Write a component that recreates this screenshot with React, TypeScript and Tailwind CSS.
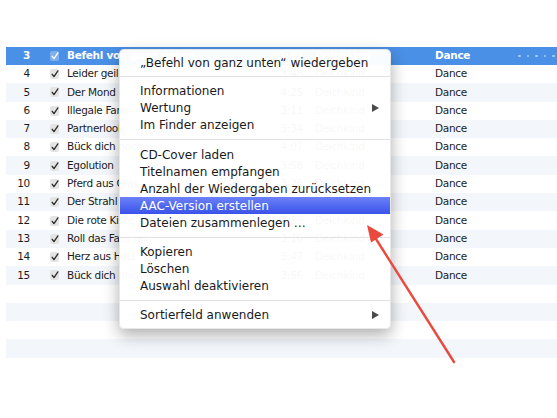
import React from 'react';

type Track = { n: number; title: string; time: string };

const TRACKS: Track[] = [
  { n: 3, title: 'Befehl von ganz unten', time: '3:42' },
  { n: 4, title: 'Leider geil', time: '3:48' },
  { n: 5, title: 'Der Mond', time: '4:25' },
  { n: 6, title: 'Illegale Fans', time: '3:11' },
  { n: 7, title: 'Partnerlook', time: '3:34' },
  { n: 8, title: 'Bück dich hoch', time: '4:07' },
  { n: 9, title: 'Egolution', time: '3:58' },
  { n: 10, title: 'Pferd aus Glas', time: '3:26' },
  { n: 11, title: 'Der Strahl', time: '4:12' },
  { n: 12, title: 'Die rote Kiste', time: '3:39' },
  { n: 13, title: 'Roll das Fass rein', time: '3:16' },
  { n: 14, title: 'Herz aus Holz', time: '3:47' },
  { n: 15, title: 'Bück dich hoch (Remix)', time: '3:56' },
];

type MenuEntry = { label: string; sub?: boolean; active?: boolean } | { sep: number };

const MENU: MenuEntry[] = [
  { label: '„Befehl von ganz unten“ wiedergeben' },
  { sep: 11 },
  { label: 'Informationen' },
  { label: 'Wertung', sub: true },
  { label: 'Im Finder anzeigen' },
  { sep: 13 },
  { label: 'CD-Cover laden' },
  { label: 'Titelnamen empfangen' },
  { label: 'Anzahl der Wiedergaben zurücksetzen' },
  { label: 'AAC-Version erstellen', active: true },
  { label: 'Dateien zusammenlegen …' },
  { sep: 12 },
  { label: 'Kopieren' },
  { label: 'Löschen' },
  { label: 'Auswahl deaktivieren' },
  { sep: 12 },
  { label: 'Sortierfeld anwenden', sub: true },
];

function Check({ selected }: { selected: boolean }) {
  return (
    <span
      className={`flex items-center justify-center w-[9px] h-[10px] rounded-[2px] ${selected ? 'bg-[#7fb0ee]' : 'bg-[#e4e4e4]'}`}
    >
      <svg width="8" height="8" viewBox="0 0 8 8">
        <path
          d="M1.2 4.3 L3 6.6 L6.9 0.9"
          fill="none"
          stroke={selected ? '#ffffff' : '#2a2a2a'}
          strokeWidth="1.3"
          strokeLinecap="round"
          strokeLinejoin="round"
        />
      </svg>
    </span>
  );
}

function Row({ track, index }: { track?: Track; index: number }) {
  const selected = index === 0;
  const bg = selected ? 'bg-[#4a90e6]' : index % 2 === 0 ? 'bg-[#f3f6fa]' : 'bg-white';
  return (
    <div
      className={`flex items-center h-[18.3px] ${bg} ${selected ? 'text-white font-bold' : 'text-[#1c1c1c]'}`}
    >
      {track && (
        <>
          <span className="w-[24px] text-right">{track.n}</span>
          <span className="w-[20px]" />
          <span className="w-[10px]">
            <Check selected={selected} />
          </span>
          <span className="w-[7px]" />
          <span className="w-[203px] whitespace-nowrap overflow-hidden">{track.title}</span>
          <span className="w-[33px] text-right">{track.time}</span>
          <span className="w-[12px]" />
          <span className="w-[120px]">Deichkind</span>
          <span className="w-[80px]">Dance</span>
          {selected && (
            <span className="flex items-center gap-[6px] pl-[3px]">
              {[0, 1, 2, 3, 4].map((d) => (
                <span key={d} className="w-[2.5px] h-[2.5px] rounded-full bg-[#a9cdf5]" />
              ))}
            </span>
          )}
        </>
      )}
    </div>
  );
}

function SubArrow({ light }: { light?: boolean }) {
  return (
    <svg width="7" height="8" viewBox="0 0 7 8">
      <path d="M0 0 L7 4 L0 8 Z" fill={light ? '#ffffff' : '#4a4a4a'} />
    </svg>
  );
}

export default function App() {
  const rows = Array.from({ length: 17 }, (_, i) => TRACKS[i]);
  return (
    <div className="relative w-[557px] h-[418px] bg-white overflow-hidden font-['DejaVu_Sans',sans-serif]">
      {/* Track list */}
      <div className="pt-[46.7px] pl-[6px] text-[10.5px] tracking-[-0.3px]">
        {rows.map((t, i) => (
          <Row key={i} track={t} index={i} />
        ))}
      </div>

      {/* Context menu */}
      <div className="absolute left-[119px] top-[49px] w-[272px] pt-[4px] pb-[5px] rounded-[5px] bg-white/[0.97] border border-[#d8d8d8]/60 shadow-[0_6px_16px_rgba(0,0,0,0.32)] text-[12px] text-[#1a1a1a]">
        {MENU.map((m, i) =>
          'sep' in m ? (
            <div key={i} className="flex items-center" style={{ height: m.sep }}>
              <div className="w-full h-px bg-[#e2e2e2]" />
            </div>
          ) : (
            <div
              key={i}
              className={`flex items-center justify-between h-[17px] pl-[20px] pr-[11px] whitespace-nowrap ${m.active ? 'bg-gradient-to-b from-[#6c80f7] to-[#3a52ea] text-white' : ''}`}
            >
              <span>{m.label}</span>
              {m.sub && <SubArrow light={m.active} />}
            </div>
          )
        )}
      </div>

      {/* Annotation arrow */}
      <svg className="absolute left-0 top-0" width="557" height="418" viewBox="0 0 557 418">
        <line x1="454" y1="362" x2="376" y2="239" stroke="#ea4a3e" strokeWidth="2.4" strokeLinecap="round" />
        <path d="M367 225 L383.5 234.5 L371 242.5 Z" fill="#ea4a3e" />
      </svg>
    </div>
  );
}
